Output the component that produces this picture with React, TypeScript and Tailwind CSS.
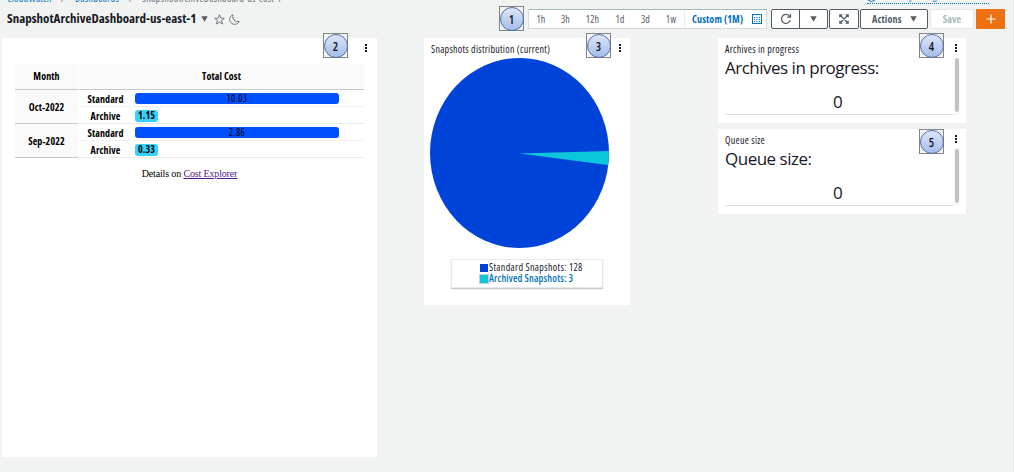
import type { ReactNode } from 'react';
import { clsx } from 'clsx';

const ranges = [
  { label: '1h', width: 'w-[24px]' },
  { label: '3h', width: 'w-[25px]' },
  { label: '12h', width: 'w-[29px]' },
  { label: '1d', width: 'w-[26px]' },
  { label: '3d', width: 'w-[25px]' },
  { label: '1w', width: 'w-[26px]' },
];

const costs = [
  { month: 'Oct-2022', standard: '10.03', archive: '1.15' },
  { month: 'Sep-2022', standard: '2.86', archive: '0.33' },
];

function Marker({ n, className }: { n: number; className: string }) {
  return (
    <div
      className={clsx(
        'absolute z-10 flex h-[25px] w-[25px] items-center justify-center border border-[#858585] bg-[#f4f5f6]',
        className,
      )}
    >
      <div className="flex h-[24px] w-[24px] shrink-0 items-center justify-center rounded-full border border-[#526fa8] bg-linear-to-b from-[#dce6f8] to-[#a5bdea] pt-[2px] text-[12px] font-semibold text-[#101828]">
        {n}
      </div>
    </div>
  );
}

function Kebab({ className }: { className: string }) {
  return (
    <div className={clsx('absolute flex flex-col gap-[1px]', className)}>
      <span className="h-[2px] w-[2px] bg-[#16191f]" />
      <span className="h-[2px] w-[2px] bg-[#16191f]" />
      <span className="h-[2px] w-[2px] bg-[#16191f]" />
    </div>
  );
}

function Caret() {
  return (
    <svg width="7" height="6" viewBox="0 0 7 6" className="shrink-0" fill="#545b64">
      <path d="M.3.3h6.4L3.5 5.8z" />
    </svg>
  );
}

function Breadcrumbs() {
  return (
    <div className="flex h-[4px] overflow-hidden text-[10px] tracking-[0.3px] text-[#687078]">
      <div className="-mt-[8px] flex h-[12px] items-center pl-[7px] leading-[12px] whitespace-nowrap">
        <span className="w-[54px] text-[#0073bb]">CloudWatch</span>
        <span className="w-[14px]">/</span>
        <span className="w-[54px] text-[#0073bb]">Dashboards</span>
        <span className="w-[13px]">/</span>
        <span>SnapshotArchiveDashboard-us-east-1</span>
      </div>
    </div>
  );
}

function Toolbar() {
  return (
    <div className="flex h-[20px] text-[10px] font-semibold tracking-[0.15px] text-[#545b64]">
      <div className="flex w-[239px] items-center border border-[#d5dbdb] border-t-[#aab7b8] bg-white font-medium">
        {ranges.map((r) => (
          <span key={r.label} className={clsx('text-center', r.width)}>
            {r.label}
          </span>
        ))}
        <div className="flex h-full items-center border-l border-[#eaeded] pl-[7px] font-bold whitespace-nowrap text-[#0073bb]">
          <span className="w-[60px]">Custom (1M)</span>
          <svg width="10" height="10" viewBox="0 0 10 10" className="shrink-0" fill="none" stroke="#0073bb">
            <rect x=".5" y=".5" width="9" height="9" />
            <path d="M2 3.5h6M2 5.5h6M2 7.5h6" strokeDasharray="1.2 1.2" />
          </svg>
        </div>
      </div>
      <div className="ml-[4px] flex w-[57px] rounded-[2px] border border-[#545b64] bg-white">
        <div className="flex w-[28px] items-center justify-center border-r border-[#545b64]">
          <svg width="12" height="12" viewBox="0 0 12 12" fill="none" stroke="#545b64" strokeWidth="1.2">
            <path d="M10.3 7.2A4.5 4.5 0 1 1 9.2 2.8L10.4 4M10.5 1v3.2H7.3" />
          </svg>
        </div>
        <div className="flex flex-1 items-center justify-center">
          <Caret />
        </div>
      </div>
      <div className="ml-[1px] flex w-[30px] items-center justify-center rounded-[2px] border border-[#545b64] bg-white">
        <svg width="10" height="10" viewBox="0 0 10 10" fill="none" stroke="#545b64" strokeWidth="1.2">
          <path d="M.8 3.3V.8h2.5M6.7.8h2.5v2.5M9.2 6.7v2.5H6.7M3.3 9.2H.8V6.7M1 1l8 8M9 1L1 9" />
        </svg>
      </div>
      <div className="ml-[1px] flex w-[68px] items-center justify-between rounded-[2px] border border-[#545b64] bg-white pr-[10px] pl-[11px] font-bold">
        <span>Actions</span>
        <Caret />
      </div>
      <div className="ml-[2px] flex w-[44px] items-center justify-center rounded-[2px] border border-[#e3e7e7] bg-white font-bold text-[#aab7b8]">
        Save
      </div>
      <div className="ml-[2px] flex w-[29px] items-center justify-center rounded-[1px] bg-[#ec7211]">
        <svg width="10" height="10" viewBox="0 0 10 10" stroke="#fff" strokeWidth="1.2">
          <path d="M5 .5v9M.5 5h9" />
        </svg>
      </div>
    </div>
  );
}

function CostTable() {
  return (
    <div className="pt-[26px] pr-[13px] pl-[13px] text-center text-[10px] font-bold tracking-[0.1px] text-black">
      <div className="flex gap-[1px]">
        <div className="flex h-[26px] w-[63px] items-center justify-center border-b border-[#c9c9c9] bg-[#fafafa]">
          Month
        </div>
        <div className="flex h-[26px] flex-1 items-center justify-center border-b border-[#c9c9c9] bg-[#fafafa]">
          Total Cost
        </div>
      </div>
      {costs.map((c) => (
        <div key={c.month} className="flex gap-[1px]">
          <div className="flex h-[34px] w-[63px] items-center justify-center border-b border-[#c9c9c9] bg-[#fafafa] pt-[2px]">
            {c.month}
          </div>
          <div className="w-[53px]">
            <div className="flex h-[17px] items-center justify-center border-b border-[#f0f0f0] pt-[2px]">
              Standard
            </div>
            <div className="flex h-[17px] items-center justify-center border-b border-[#eaeaea] pt-[2px]">
              Archive
            </div>
          </div>
          <div className="flex-1">
            <div className="flex h-[17px] items-center border-b border-[#f0f0f0] pt-[1px] pl-[2px]">
              <div className="flex h-[11px] w-[204px] items-center justify-center rounded-[3px] bg-[#0050ff] font-medium tracking-[0.35px]">
                {c.standard}
              </div>
            </div>
            <div className="flex h-[17px] items-center border-b border-[#eaeaea] pt-[1px] pl-[2px]">
              <div className="flex h-[12px] w-[23px] items-center justify-center rounded-[3px] bg-[#33d3fb]">
                {c.archive}
              </div>
            </div>
          </div>
        </div>
      ))}
      <p className="mt-[9px] font-['Liberation_Serif',serif] text-[10px] leading-[14px] font-normal tracking-[-0.15px]">
        Details on <span className="text-[#551a8b] underline">Cost Explorer</span>
      </p>
    </div>
  );
}

function Distribution() {
  return (
    <>
      <h2 className="h-[20px] pt-[5px] pl-[7px] text-[10px] leading-[13px] tracking-[0.28px] whitespace-nowrap text-[#16191f]">
        Snapshots distribution (current)
      </h2>
      <svg width="179" height="190" viewBox="0 0 179 190" className="ml-[6px]">
        <ellipse cx="89.5" cy="95" rx="89.5" ry="95" fill="#0043d9" />
        <path d="M89.5 95.5L179 93A89.5 95 0 0 1 177.9 107z" fill="#0cc7dc" />
      </svg>
      <div className="mt-[11px] ml-[27px] h-[29px] w-[152px] border border-[#e6e9e9] bg-white pt-[2px] pl-[28px] text-[10px] leading-[11px] tracking-[0.35px] whitespace-nowrap shadow-[0_1px_1px_#c5cbcb]">
        <div className="flex items-center gap-[1px] text-[#16191f]">
          <span className="h-[8px] w-[8px] bg-[#0043d9]" />
          Standard Snapshots: 128
        </div>
        <div className="flex items-center gap-[1px] text-[#0073bb]">
          <span className="h-[8px] w-[8px] bg-[#0cc7dc] outline outline-[#c8cfcf]" />
          <span className="font-semibold tracking-[0.2px]">Archived Snapshots: 3</span>
        </div>
      </div>
    </>
  );
}

function CountPanel({ title, children }: { title: string; children: ReactNode }) {
  return (
    <section className="relative h-[85px] bg-white pt-[5px] pl-[7px]">
      <h2 className="text-[10px] leading-[13px] tracking-[0.28px] text-[#16191f]">{title}</h2>
      <div className="flex h-[59px] w-[235px] justify-between text-[17px] tracking-[-0.5px] text-[#16191f] [font-stretch:normal]">
        <div className="h-[59px] w-[228px] border-b border-[#dcdcdc]">
          <p className="h-[35px] leading-[23px]">{title}:</p>
          <p className="leading-[22px]">{children}</p>
        </div>
        <div className="flex w-[7px] justify-center bg-[#fafafa]">
          <span className="mt-[2px] h-[54px] w-[4px] rounded-full bg-[#c1c1c1]" />
        </div>
      </div>
      <Kebab className="top-[6px] left-[237px]" />
    </section>
  );
}

export default function App() {
  return (
    <div className="relative h-[472px] w-[1014px] overflow-hidden border-r border-[#e3e7e7] bg-[#f1f3f3] font-['Open_Sans','Noto_Sans',sans-serif] [font-stretch:75%]">
      <div className="flex h-[4px] justify-between">
        <Breadcrumbs />
        <div className="mr-[24px] h-[4px] w-[122px] overflow-hidden border-b border-dotted border-[#0073bb] text-[9px] text-[#0073bb]">
          <div className="-mt-[9px] flex h-[12px] items-center gap-[3px] leading-[12px] whitespace-nowrap">
            <span className="h-[9px] w-[9px] shrink-0 rounded-full border border-[#0073bb]" />
            Switch to your original interface
          </div>
        </div>
      </div>
      <header className="flex h-[34px] justify-between pt-[5px] pr-[8px] pl-[7px]">
        <div className="flex h-[20px] items-center">
          <h1 className="w-[194px] text-[13px] font-bold whitespace-nowrap text-[#16191f]">
            SnapshotArchiveDashboard-us-east-1
          </h1>
          <Caret />
          <svg width="11" height="11" viewBox="0 0 11 11" className="ml-[6px]" fill="none" stroke="#545b64" strokeWidth=".8">
            <path d="M5.5.8l1.3 3.3 3.5.2-2.7 2.2.9 3.5-3-1.9-3 1.9.9-3.5L.7 4.3l3.5-.2z" />
          </svg>
          <svg width="11" height="11" viewBox="0 0 11 11" className="ml-[4px]" fill="none" stroke="#545b64" strokeWidth=".8">
            <path d="M4 .8C2.9 4.8 5.7 8.4 10.3 7.5 8.8 10.5 4.4 11.5 2 8.7-.4 6 .7 2 4 .8z" />
          </svg>
        </div>
        <Toolbar />
      </header>
      <main className="flex items-start pl-[2px]">
        <section className="relative h-[419px] w-[375px] bg-white">
          <CostTable />
          <Kebab className="top-[6px] left-[363px]" />
        </section>
        <section className="relative ml-[47px] h-[267px] w-[206px] bg-white">
          <Distribution />
          <Kebab className="top-[6px] left-[195px]" />
        </section>
        <div className="ml-[88px] flex w-[248px] flex-col gap-[6px]">
          <CountPanel title="Archives in progress">
            <span className="pl-[108px]">0</span>
          </CountPanel>
          <CountPanel title="Queue size">
            <span className="pl-[108px]">0</span>
          </CountPanel>
        </div>
      </main>
      <Marker n={1} className="top-[6px] left-[499px]" />
      <Marker n={2} className="top-[33px] left-[323px]" />
      <Marker n={3} className="top-[33px] left-[586px]" />
      <Marker n={4} className="top-[33px] left-[919px]" />
      <Marker n={5} className="top-[129px] left-[919px]" />
    </div>
  );
}
